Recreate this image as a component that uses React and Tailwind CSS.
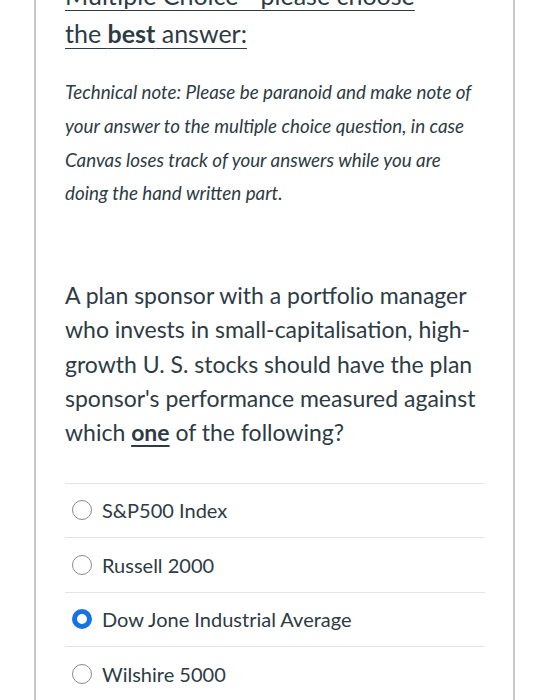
export default function App() {
  const options = [
    { label: "S&P500 Index", checked: false },
    { label: "Russell 2000", checked: false },
    { label: "Dow Jone Industrial Average", checked: true },
    { label: "Wilshire 5000", checked: false },
  ];
  return (
    <div className="w-[560px] h-[700px] overflow-hidden bg-white" style={{ fontFamily: "Lato, 'Open Sans', sans-serif" }}>
      <div className="ml-[34px] w-[481px] h-[700px] flex flex-col border-x-2 border-[#c9c9c9] pl-[29px] pr-[28px]">
        <div className="-mt-[24px] text-[25px] leading-[38px] text-[#2d3b45] underline decoration-1 underline-offset-[5px]">
          <p>Multiple Choice - please choose</p>
          <p>the <strong className="font-bold">best</strong> answer:</p>
        </div>
        <p className="mt-[23px] pr-[12px] italic text-[18.8px] leading-[33.8px] text-[#2d3b45]">
          Technical note: Please be paranoid and make note of your answer to the multiple choice question, in case Canvas loses track of your answers while you are doing the hand written part.
        </p>
        <p className="mt-[68px] text-[23px] leading-[34.3px] text-[#2d3b45]">
          A plan sponsor with a portfolio manager who invests in small-capitalisation, high-growth U. S. stocks should have the plan sponsor's performance measured against which <span className="font-bold underline underline-offset-[4px]">one</span> of the following?
        </p>
        <div className="mt-[33px] border-t border-[#e2e4e6]">
          {options.map((o) => (
            <div key={o.label} className="h-[54.5px] flex items-center gap-[10px] pl-[7px] border-b border-[#e2e4e6]">
              {o.checked ? (
                <span className="w-[20px] h-[20px] rounded-full border-[5px] border-[#1673e6] bg-white shrink-0" />
              ) : (
                <span className="w-[20px] h-[20px] rounded-full border-[1.5px] border-[#8a8a8a] bg-white shrink-0" />
              )}
              <span className="text-[20px] text-[#2d3b45]">{o.label}</span>
            </div>
          ))}
        </div>
      </div>
    </div>
  );
}
